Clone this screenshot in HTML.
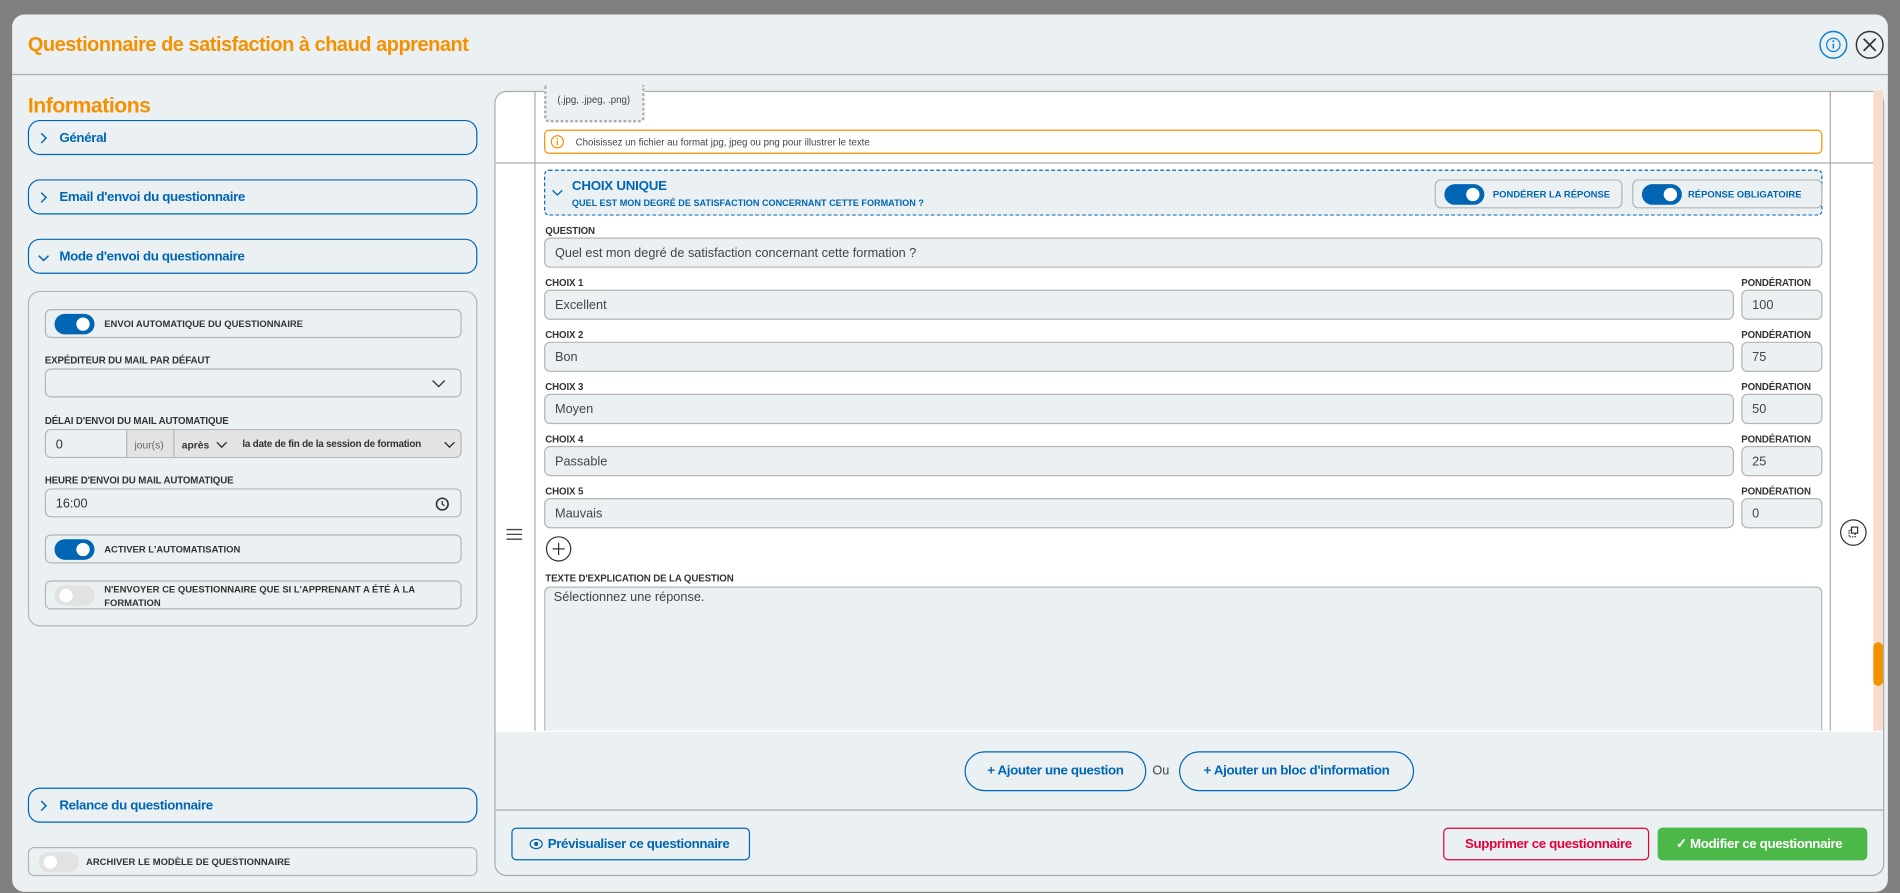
<!DOCTYPE html>
<html><head><meta charset="utf-8"><style>
*{box-sizing:border-box;margin:0;padding:0}
html,body{width:1900px;height:893px;overflow:hidden;background:#7f7f7f;font-family:"Liberation Sans",sans-serif;color:#333}
#w{position:absolute;left:0;top:0;width:1568px;height:737px;transform:scale(1.21173);transform-origin:0 0}
.a{position:absolute}
.modal{left:10px;top:12px;width:1548px;height:724px;background:#ebf0f3;border-radius:10px}
.title{left:23px;top:28px;font-size:16.5px;font-weight:bold;color:#f39200;letter-spacing:-0.4px}
.hline{background:#aaa;height:1px}
.acc{left:23px;width:371px;height:29px;border:1.3px solid #0066b3;border-radius:10px;font-size:11px;font-weight:bold;color:#0066b3;padding:8px 0 0 25px;letter-spacing:-0.3px}
.acc svg{position:absolute;left:8px;top:9px}
.row{border:1px solid #b5b5b5;border-radius:5px;background:#ebf0f3}
.lbl{font-size:8px;font-weight:bold;color:#333;letter-spacing:-0.1px}
.tg{position:absolute;width:33px;height:17px;border-radius:9px;background:#0066b3}
.tg::after{content:"";position:absolute;right:4px;top:3px;width:11px;height:11px;border-radius:50%;background:#fff}
.tg.off{background:#e2e2e2}
.tg.off::after{left:4px;right:auto}
.tl{position:absolute;font-size:7.8px;font-weight:bold;color:#333}
.inp{border:1px solid #b5b5b5;border-radius:5px;background:#ebf0f3;font-size:10.5px;color:#444;padding:6px 0 0 8px}
.btn{border:1.2px solid #0066b3;border-radius:17px;font-size:11px;font-weight:bold;color:#0066b3;text-align:center;letter-spacing:-0.3px}
</style></head><body><div id="w">
<div class="a modal"></div>
<div class="a title">Questionnaire de satisfaction à chaud apprenant</div>
<svg class="a" style="left:1501px;top:25px" width="24" height="24"><circle cx="12" cy="12" r="11" fill="none" stroke="#0a7ed0" stroke-width="1.2"/><circle cx="12" cy="12" r="5.5" fill="none" stroke="#0a7ed0" stroke-width="1"/><line x1="12" y1="11" x2="12" y2="15" stroke="#0a7ed0" stroke-width="1.2"/><circle cx="12" cy="9" r=".8" fill="#0a7ed0"/></svg>
<svg class="a" style="left:1531px;top:25px" width="24" height="24"><circle cx="12" cy="12" r="11" fill="none" stroke="#333" stroke-width="1.2"/><path d="M7 7L17 17M17 7L7 17" stroke="#333" stroke-width="1.4"/></svg>
<div class="a hline" style="left:10px;top:61px;width:1548px"></div>

<div class="a" style="left:23px;top:77px;font-size:17.5px;font-weight:bold;color:#f39200;letter-spacing:-0.4px">Informations</div>
<div class="a acc" style="top:99px"><svg width="8" height="10"><path d="M2 1L6 5L2 9" fill="none" stroke="#0066b3" stroke-width="1.2"/></svg>Général</div>
<div class="a acc" style="top:148px"><svg width="8" height="10"><path d="M2 1L6 5L2 9" fill="none" stroke="#0066b3" stroke-width="1.2"/></svg>Email d'envoi du questionnaire</div>
<div class="a acc" style="top:197px"><svg width="10" height="8" style="left:7px;top:11px"><path d="M1 2L5 6L9 2" fill="none" stroke="#0066b3" stroke-width="1.2"/></svg>Mode d'envoi du questionnaire</div>
<div class="a" style="left:23px;top:240px;width:371px;height:277px;border:1px solid #b5b5b5;border-radius:10px"></div>
<div class="a row" style="left:37px;top:255px;width:344px;height:24px"><div class="tg" style="left:7px;top:3px"></div><div class="tl" style="left:48px;top:7px">ENVOI AUTOMATIQUE DU QUESTIONNAIRE</div></div>
<div class="a lbl" style="left:37px;top:293px">EXPÉDITEUR DU MAIL PAR DÉFAUT</div>
<div class="a row" style="left:37px;top:304px;width:344px;height:24px"><svg class="a" style="left:318px;top:8px" width="12" height="8"><path d="M1 1L6 6L11 1" fill="none" stroke="#333" stroke-width="1.1"/></svg></div>
<div class="a lbl" style="left:37px;top:343px">DÉLAI D'ENVOI DU MAIL AUTOMATIQUE</div>
<div class="a row" style="left:37px;top:354px;width:344px;height:24px;overflow:hidden">
<div class="a" style="left:8px;top:6px;font-size:10.5px">0</div>
<div class="a" style="left:66px;top:0;width:40px;height:24px;background:#e3e3e3;border-left:1px solid #b5b5b5;border-right:1px solid #b5b5b5;font-size:8.5px;color:#666;padding:7px 0 0 6px">jour(s)</div>
<div class="a" style="left:106px;top:0;width:238px;height:24px;background:#e3e3e3"></div>
<div class="a" style="left:112px;top:7px;font-size:8.5px;font-weight:bold">après</div>
<svg class="a" style="left:140px;top:9px" width="10" height="7"><path d="M1 1L5 5L9 1" fill="none" stroke="#333" stroke-width="1.1"/></svg>
<div class="a" style="left:162px;top:7px;font-size:8.2px;font-weight:bold;letter-spacing:-0.2px">la date de fin de la session de formation</div>
<svg class="a" style="left:328px;top:9px" width="10" height="7"><path d="M1 1L5 5L9 1" fill="none" stroke="#333" stroke-width="1.1"/></svg>
</div>
<div class="a lbl" style="left:37px;top:392px">HEURE D'ENVOI DU MAIL AUTOMATIQUE</div>
<div class="a row" style="left:37px;top:403px;width:344px;height:24px"><div class="a" style="left:8px;top:6px;font-size:10.5px">16:00</div><svg class="a" style="left:321px;top:6px" width="12" height="12"><circle cx="6" cy="6" r="4.8" fill="none" stroke="#333" stroke-width="1.3"/><path d="M6 3.5V6L7.8 7.5" fill="none" stroke="#333" stroke-width="1.1"/></svg></div>
<div class="a row" style="left:37px;top:441px;width:344px;height:24px"><div class="tg" style="left:7px;top:3px"></div><div class="tl" style="left:48px;top:7px">ACTIVER L'AUTOMATISATION</div></div>
<div class="a row" style="left:37px;top:479px;width:344px;height:24px"><div class="tg off" style="left:7px;top:3px"></div><div class="tl" style="left:48px;top:1px;line-height:11px">N'ENVOYER CE QUESTIONNAIRE QUE SI L'APPRENANT A ÉTÉ À LA<br>FORMATION</div></div>
<div class="a acc" style="top:650px"><svg width="8" height="10"><path d="M2 1L6 5L2 9" fill="none" stroke="#0066b3" stroke-width="1.2"/></svg>Relance du questionnaire</div>
<div class="a row" style="left:23px;top:699px;width:371px;height:24px"><div class="tg off" style="left:8px;top:3px"></div><div class="tl" style="left:47px;top:7px">ARCHIVER LE MODÈLE DE QUESTIONNAIRE</div></div>

<!-- right panel -->
<div class="a" style="left:408px;top:75px;width:1147px;height:648px;border:1px solid #aaa;border-radius:10px;overflow:hidden">
<div class="a" style="left:0;top:0;width:1146px;height:528px;background:#fff"></div>
</div>
<div class="a" style="left:441px;top:75px;width:1px;height:528px;background:#aaa"></div>
<div class="a" style="left:1510px;top:75px;width:1px;height:528px;background:#aaa"></div>
<div class="a" style="left:1546px;top:75px;width:8px;height:528px;background:#f8dccb"></div>
<div class="a" style="left:1546px;top:530px;width:8px;height:36px;background:#f39200;border-radius:4px"></div>
<div class="a hline" style="left:409px;top:134px;width:1137px"></div>
<div class="a" style="left:449px;top:70px;width:83px;height:31px;border:2px dotted #aaa;border-top:none;border-radius:0 0 4px 4px;background:#ebf0f3;font-size:8px;color:#444;padding:8px 0 0 9px">(.jpg, .jpeg, .png)</div>
<div class="a" style="left:449px;top:107px;width:1055px;height:20px;border:1px solid #f39200;border-radius:4px;font-size:8px;color:#444;padding:5px 0 0 25px"><svg class="a" style="left:4px;top:3px" width="12" height="12"><circle cx="6" cy="6" r="5" fill="none" stroke="#f39200" stroke-width="1"/><line x1="6" y1="5" x2="6" y2="9" stroke="#f39200"/><circle cx="6" cy="3.4" r=".6" fill="#f39200"/></svg>Choisissez un fichier au format jpg, jpeg ou png pour illustrer le texte</div>
<div class="a" style="left:449px;top:140px;width:1055px;height:38px;border:1px dashed #0066b3;border-radius:4px;background:#ebf0f3"></div>
<svg class="a" style="left:455px;top:156px" width="10" height="7"><path d="M1 1L5 5L9 1" fill="none" stroke="#0066b3" stroke-width="1.1"/></svg>
<div class="a" style="left:472px;top:148px;font-size:11px;font-weight:bold;color:#0066b3;letter-spacing:-0.2px">CHOIX UNIQUE</div>
<div class="a" style="left:472px;top:163px;font-size:7.5px;font-weight:bold;color:#0066b3">QUEL EST MON DEGRÉ DE SATISFACTION CONCERNANT CETTE FORMATION ?</div>
<div class="a row" style="left:1184px;top:148px;width:155px;height:24px"><div class="tg" style="left:7px;top:3px"></div><div class="tl" style="left:47px;top:7px;color:#0066b3;font-size:7.8px">PONDÉRER LA RÉPONSE</div></div>
<div class="a row" style="left:1347px;top:148px;width:157px;height:24px"><div class="tg" style="left:7px;top:3px"></div><div class="tl" style="left:45px;top:7px;color:#0066b3;font-size:7.8px">RÉPONSE OBLIGATOIRE</div></div>
<div class="a lbl" style="left:450px;top:186px">QUESTION</div>
<div class="a inp" style="left:449px;top:196px;width:1055px;height:25px">Quel est mon degré de satisfaction concernant cette formation ?</div>

<div class="a lbl" style="left:450px;top:229px">CHOIX 1</div><div class="a lbl" style="left:1437px;top:229px">PONDÉRATION</div>
<div class="a inp" style="left:449px;top:239px;width:982px;height:25px">Excellent</div><div class="a inp" style="left:1437px;top:239px;width:67px;height:25px">100</div>
<div class="a lbl" style="left:450px;top:272px">CHOIX 2</div><div class="a lbl" style="left:1437px;top:272px">PONDÉRATION</div>
<div class="a inp" style="left:449px;top:282px;width:982px;height:25px">Bon</div><div class="a inp" style="left:1437px;top:282px;width:67px;height:25px">75</div>
<div class="a lbl" style="left:450px;top:315px">CHOIX 3</div><div class="a lbl" style="left:1437px;top:315px">PONDÉRATION</div>
<div class="a inp" style="left:449px;top:325px;width:982px;height:25px">Moyen</div><div class="a inp" style="left:1437px;top:325px;width:67px;height:25px">50</div>
<div class="a lbl" style="left:450px;top:358px">CHOIX 4</div><div class="a lbl" style="left:1437px;top:358px">PONDÉRATION</div>
<div class="a inp" style="left:449px;top:368px;width:982px;height:25px">Passable</div><div class="a inp" style="left:1437px;top:368px;width:67px;height:25px">25</div>
<div class="a lbl" style="left:450px;top:401px">CHOIX 5</div><div class="a lbl" style="left:1437px;top:401px">PONDÉRATION</div>
<div class="a inp" style="left:449px;top:411px;width:982px;height:25px">Mauvais</div><div class="a inp" style="left:1437px;top:411px;width:67px;height:25px">0</div>
<svg class="a" style="left:450px;top:442px" width="22" height="22"><circle cx="11" cy="11" r="10" fill="none" stroke="#333" stroke-width="1"/><path d="M11 6V16M6 11H16" stroke="#333" stroke-width="1"/></svg>
<svg class="a" style="left:418px;top:436px" width="13" height="10"><path d="M0 1H13M0 5H13M0 9H13" stroke="#444" stroke-width="1.1"/></svg>
<svg class="a" style="left:1518px;top:428px" width="23" height="23"><circle cx="11.5" cy="11.5" r="10.5" fill="none" stroke="#333" stroke-width="1"/><rect x="10" y="7" width="5" height="5" fill="none" stroke="#333" stroke-width="1"/><path d="M10 9.5H8V15H13V12" fill="none" stroke="#333" stroke-width="1" stroke-dasharray="1.2 .8"/></svg>
<div class="a lbl" style="left:450px;top:473px">TEXTE D'EXPLICATION DE LA QUESTION</div>
<div class="a" style="left:449px;top:484px;width:1055px;height:119px;border:1px solid #b5b5b5;border-bottom:none;border-radius:5px 5px 0 0;background:#ebf0f3;font-size:10.5px;color:#444;padding:2px 0 0 7px">Sélectionnez une réponse.</div>

<div class="a btn" style="left:796px;top:620px;width:150px;height:33px;padding-top:9px">+ Ajouter une question</div>
<div class="a" style="left:951px;top:630px;font-size:10.5px;color:#444">Ou</div>
<div class="a btn" style="left:973px;top:620px;width:194px;height:33px;padding-top:9px">+ Ajouter un bloc d'information</div>
<div class="a hline" style="left:409px;top:668px;width:1145px"></div>
<div class="a" style="left:422px;top:683px;width:197px;height:27px;border:1.2px solid #0066b3;border-radius:4px;font-size:11px;font-weight:bold;color:#0066b3;padding:7px 0 0 14px;letter-spacing:-0.3px"><svg style="vertical-align:-1px;margin-right:4px" width="11" height="9"><ellipse cx="5.5" cy="4.5" rx="5" ry="3.8" fill="none" stroke="#0066b3" stroke-width="1"/><circle cx="5.5" cy="4.5" r="1.7" fill="#0066b3"/></svg>Prévisualiser ce questionnaire</div>
<div class="a" style="left:1191px;top:683px;width:170px;height:27px;border:1px solid #e4003a;border-radius:4px;font-size:11px;font-weight:bold;color:#e4003a;padding:7px 0 0 17px;letter-spacing:-0.3px">Supprimer ce questionnaire</div>
<div class="a" style="left:1368px;top:683px;width:173px;height:27px;background:#4cb847;border-radius:4px;font-size:11px;font-weight:bold;color:#fff;padding:7px 0 0 15px;letter-spacing:-0.3px">✓ Modifier ce questionnaire</div>
</div></body></html>
